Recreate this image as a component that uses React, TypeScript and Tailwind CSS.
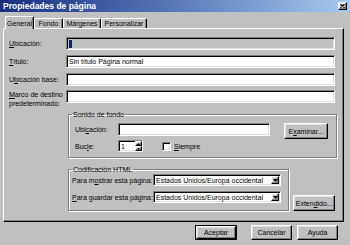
import React from "react";

const sunken =
  "border border-t-[#808080] border-l-[#808080] border-b-white border-r-white shadow-[inset_1px_1px_0_#000,inset_-1px_-1px_0_#dfdfdf]";
const raised =
  "bg-[#c0c0c0] border border-t-white border-l-white border-b-black border-r-black shadow-[inset_-1px_-1px_0_#808080,inset_1px_1px_0_#dfdfdf]";
const etched =
  "border border-[#808080] shadow-[1px_1px_0_#ffffff,inset_1px_1px_0_#ffffff]";

function Btn({ children, w, className = "" }: { children: React.ReactNode; w: string; className?: string }) {
  return (
    <div className={`${raised} ${w} h-[15px] flex items-center justify-center ${className}`}>{children}</div>
  );
}

function Select({ value }: { value: string }) {
  return (
    <div className={`${sunken} bg-white w-[128px] h-[12px] flex items-center pl-[2px] pr-[1px]`}>
      <span className="flex-1">{value}</span>
      <div className={`${raised} w-[8px] h-[8px] flex items-center justify-center`}>
        <svg width="5" height="3" viewBox="0 0 5 3">
          <path d="M0 0H5L2.5 3Z" fill="#000" />
        </svg>
      </div>
    </div>
  );
}

function Tab({ children, w, selected }: { children: React.ReactNode; w: string; selected?: boolean }) {
  return (
    <div
      className={`${w} ${
        selected ? "h-[13px] -mb-[1px] z-10" : "h-[10px]"
      } relative bg-[#c0c0c0] border-t border-l border-r border-t-white border-l-white border-r-black rounded-t-[2px] shadow-[inset_-1px_0_0_#808080] flex items-center justify-center`}
    >
      {children}
    </div>
  );
}

export default function App() {
  return (
    <div className="w-[350px] h-[245px] bg-[#c0c0c0] overflow-hidden flex flex-col font-['Liberation_Sans',Arial,sans-serif] text-[7px] leading-none text-black whitespace-nowrap">
      {/* Title bar */}
      <div className="h-[12px] shrink-0 flex items-center pl-[3px] pr-[3px] bg-linear-to-r from-[#1a2c80] to-[#a6caf0]">
        <span className="text-white font-bold text-[8.5px]">Propiedades de página</span>
        <div className={`${raised} ml-auto w-[9px] h-[8px] flex items-center justify-center`}>
          <svg width="5" height="4" viewBox="0 0 5 4">
            <path d="M0.5 0.3L4.5 3.7M4.5 0.3L0.5 3.7" stroke="#000" strokeWidth="1.1" />
          </svg>
        </div>
      </div>

      {/* Tabs */}
      <div className="mt-[4px] h-[12px] shrink-0 flex items-end pl-[5px] relative z-10">
        <Tab w="w-[29px]" selected>General</Tab>
        <Tab w="w-[29px]">Fondo</Tab>
        <Tab w="w-[38px]">Márgenes</Tab>
        <Tab w="w-[46px]">Personalizar</Tab>
      </div>

      {/* Panel */}
      <div className="ml-[3px] w-[341px] h-[194px] shrink-0 border border-t-white border-l-white border-r-black border-b-black shadow-[inset_-1px_-1px_0_#808080] pt-[8px] pl-[5px] pr-[8px] flex flex-col">
        <div className="flex items-center h-[13px]">
          <span className="w-[57px]"><u>U</u>bicación:</span>
          <div className={`${sunken} flex-1 h-[13px] bg-[#c0c0c0] flex items-center pl-[2px]`}>
            <span className="w-[3px] h-[8px] bg-[#0a246a]" />
          </div>
        </div>
        <div className="flex items-center h-[13px] mt-[5px]">
          <span className="w-[57px]"><u>T</u>ítulo:</span>
          <div className={`${sunken} flex-1 h-[13px] bg-white flex items-center pl-[2px]`}>Sin título Página normal</div>
        </div>
        <div className="flex items-center h-[13px] mt-[5px]">
          <span className="w-[57px]">U<u>b</u>icación base:</span>
          <div className={`${sunken} flex-1 h-[13px] bg-white`} />
        </div>
        <div className="flex items-start mt-[4px]">
          <span className="w-[57px] leading-[9px]">
            <u>M</u>arco de destino
            <br />
            predeterminado:
          </span>
          <div className={`${sunken} flex-1 h-[13px] bg-white`} />
        </div>

        {/* Sonido de fondo */}
        <fieldset className={`${etched} ml-[59px] mt-[2px] w-[269px] p-0 m-0 min-w-0`}>
          <legend className="ml-[3px] px-[1px] h-[9px] leading-[9px]">Sonido de fondo</legend>
          <div className="pt-[4px] pl-[6px] pb-[5px]">
            <div className="flex items-start h-[16px]">
              <span className="w-[43px] h-[13px] flex items-center">Ubi<u>c</u>ación:</span>
              <div className={`${sunken} w-[152px] h-[13px] bg-white`} />
              <Btn w="w-[44px]" className="ml-[14px] !h-[16px]">
                E<u>x</u>aminar...
              </Btn>
            </div>
            <div className="flex items-center h-[12px] mt-[1px]">
              <span className="w-[43px]">Buc<u>l</u>e:</span>
              <div className={`${sunken} w-[25px] h-[12px] bg-white flex items-center pl-[2px]`}>
                <span className="flex-1">1</span>
                <div className="flex flex-col w-[7px] h-[10px]">
                  <div className={`${raised} h-[5px] flex items-center justify-center`}>
                    <svg width="3" height="2" viewBox="0 0 3 2"><path d="M0 2H3L1.5 0Z" fill="#000" /></svg>
                  </div>
                  <div className={`${raised} h-[5px] flex items-center justify-center`}>
                    <svg width="3" height="2" viewBox="0 0 3 2"><path d="M0 0H3L1.5 2Z" fill="#000" /></svg>
                  </div>
                </div>
              </div>
              <div className={`${sunken} ml-[19px] w-[9px] h-[9px] bg-white`} />
              <span className="ml-[3px]"><u>S</u>iempre</span>
            </div>
          </div>
        </fieldset>

        {/* Codificación HTML */}
        <div className="flex items-end ml-[59px] mt-[7px]">
          <fieldset className={`${etched} w-[224px] p-0 m-0 min-w-0`}>
            <legend className="ml-[3px] px-[1px] h-[9px] leading-[9px]">Codificación HTML</legend>
            <div className="pl-[3px] pb-[7px]">
              <div className="flex items-center h-[12px]">
                <span className="w-[81px]">Para m<u>o</u>strar esta página:</span>
                <Select value="Estados Unidos/Europa occidental" />
              </div>
              <div className="flex items-center h-[12px] mt-[5px]">
                <span className="w-[81px]"><u>P</u>ara guardar esta página:</span>
                <Select value="Estados Unidos/Europa occidental" />
              </div>
            </div>
          </fieldset>
          <Btn w="w-[42px]" className="ml-[4px] !h-[16px]">
            Exten<u>d</u>ido...
          </Btn>
        </div>
      </div>

      {/* Bottom buttons */}
      <div className="mt-[3px] flex justify-end pr-[12px]">
        <div className="w-[42px] h-[15px] border border-black flex">
          <div className={`${raised} flex-1 flex items-center justify-center`}>Aceptar</div>
        </div>
        <Btn w="w-[41px]" className="ml-[14px]">Cancelar</Btn>
        <Btn w="w-[41px]" className="ml-[5px]">Ayuda</Btn>
      </div>
    </div>
  );
}
